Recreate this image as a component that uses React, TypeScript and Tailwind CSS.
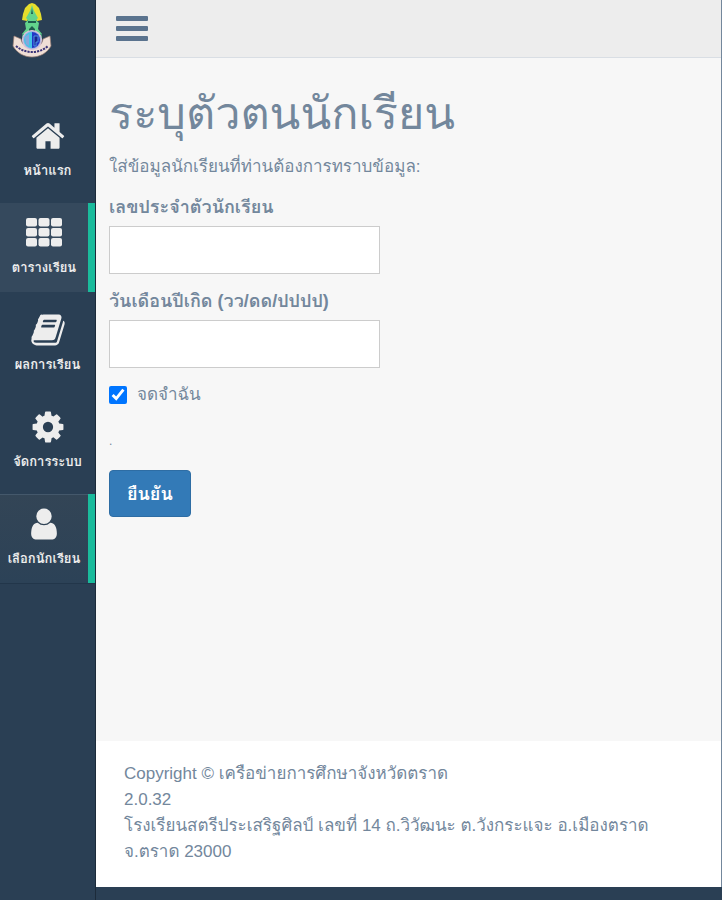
import { useState } from "react";

interface MenuItem {
  label: string;
  icon: "home" | "grid" | "book" | "cog" | "user";
  state?: "current" | "open";
}

const MENU: MenuItem[] = [
  { label: "หน้าแรก", icon: "home" },
  { label: "ตารางเรียน", icon: "grid", state: "current" },
  { label: "ผลการเรียน", icon: "book" },
  { label: "จัดการระบบ", icon: "cog" },
  { label: "เลือกนักเรียน", icon: "user", state: "open" },
];

const ICON_PATHS = {
  home: "M1472 992v480q0 26-19 45t-45 19h-384v-384h-256v384h-384q-26 0-45-19t-19-45v-480q0-1 .5-3t.5-3l575-474 575 474q1 2 1 6zm223-69l-62 74q-8 9-21 11h-3q-13 0-21-7l-692-577-692 577q-12 8-24 7-13-2-21-11l-62-74q-8-10-7-23.5t11-21.5l719-599q32-26 76-26t76 26l244 204v-195q0-14 9-23t23-9h192q14 0 23 9t9 23v408l219 182q10 8 11 21.5t-7 23.5z",
  book: "M1703 478q40 57 18 129l-275 906q-19 64-76.5 107.5t-122.5 43.5h-923q-77 0-148.5-53.5t-99.5-131.5q-24-67-2-127 0-4 3-27t4-37q1-8-3-21.5t-3-19.5q2-11 8-21t16.5-23.5 16.5-23.5q23-38 45-91.5t30-91.5q3-10 .5-30t-.5-28q3-11 17-28t17-23q21-36 42-92t25-90q1-9-2.5-32t.5-28q4-13 22-30.5t22-22.5q19-26 42.5-84.5t27.5-96.5q1-8-3-25.5t-2-26.5q2-8 9-18t18-23 17-21q8-12 16.5-30.5t15-35 16-36 19.5-32 26.5-23.5 36-11.5 47.5 5.5l-1 3q38-9 51-9h761q74 0 114 56t18 130l-274 906q-36 119-71.5 153.5t-128.5 34.5h-869q-27 0-38 15-11 16-1 43 24 70 144 70h923q29 0 56-15.5t35-41.5l300-987q7-22 5-57 38 15 59 43zm-1064 2q-4 13 2 22.5t20 9.5h608q13 0 25.5-9.5t16.5-22.5l21-64q4-13-2-22.5t-20-9.5h-608q-13 0-25.5 9.5t-16.5 22.5zm-83 256q-4 13 2 22.5t20 9.5h608q13 0 25.5-9.5t16.5-22.5l21-64q4-13-2-22.5t-20-9.5h-608q-13 0-25.5 9.5t-16.5 22.5z",
  cog: "M1152 896q0-106-75-181t-181-75-181 75-75 181 75 181 181 75 181-75 75-181zm512-109v222q0 12-8 23t-20 13l-185 28q-19 54-39 91 35 50 107 138 10 12 10 25t-9 23q-27 37-99 108t-94 71q-12 0-26-9l-138-108q-44 23-91 38-16 136-29 186-7 28-36 28h-222q-14 0-24.5-8.5t-11.5-21.5l-28-184q-49-16-90-37l-141 107q-10 9-25 9-14 0-25-11-126-114-165-168-7-10-7-23 0-12 8-23 15-21 51-66.5t54-70.5q-27-50-41-99l-183-27q-13-2-21-12.5t-8-23.5v-222q0-12 8-23t19-13l186-28q14-46 39-92-40-57-107-138-10-12-10-24 0-10 9-23 26-36 98.5-107.5t94.5-71.5q13 0 26 10l138 107q44-23 91-38 16-136 29-186 7-28 36-28h222q14 0 24.5 8.5t11.5 21.5l28 184q49 16 90 37l142-107q9-9 24-9 13 0 25 10 129 119 165 170 7 8 7 22 0 12-8 23-15 21-51 66.5t-54 70.5q26 50 41 98l183 28q13 2 21 12.5t8 23.5z",
  user: "M1536 1399q0 109-62.5 187t-150.5 78h-854q-88 0-150.5-78t-62.5-187q0-85 8.5-160.5t31.5-152 58.5-131 94-89 134.5-34.5q131 128 313 128t313-128q76 0 134.5 34.5t94 89 58.5 131 31.5 152 8.5 160.5zm-256-887q0 159-112.5 271.5t-271.5 112.5-271.5-112.5-112.5-271.5 112.5-271.5 271.5-112.5 271.5 112.5 112.5 271.5z",
};

function MenuIcon({ name }: { name: MenuItem["icon"] }) {
  if (name === "grid") {
    return (
      <svg viewBox="0 0 36 36" className="h-9 w-9 fill-current" aria-hidden="true">
        {[3, 13, 23].map((y) =>
          [0, 12.5, 25].map((x) => (
            <rect key={`${x}-${y}`} x={x} y={y} width="11" height="8.5" rx="2" />
          )),
        )}
      </svg>
    );
  }
  return (
    <svg viewBox="0 0 1792 1792" className="h-9 w-9 fill-current" aria-hidden="true">
      <path d={ICON_PATHS[name]} />
    </svg>
  );
}

function SchoolLogo() {
  return (
    <svg viewBox="0 0 40 56" className="h-14 w-10" role="img" aria-label="ตราโรงเรียน">
      {/* crown */}
      <path d="M17 1l-4 4-2 6-1 6 5 1 5-9 5 9 5-1-1-6-2-6-4-4-3-1z" fill="#e6de2c" />
      <path d="M20 2l2 6 4 7-2 2 3 3-1 6 4 5v5H10v-5l4-5-1-6 3-3-2-2 4-7z" fill="#62d38c" />
      <path d="M20 5l1 6h-2zM16 18h8v2h-8zM17 26l3-3 3 3v3h-6z" fill="#1e5c4c" />
      <path d="M11 31v4M29 31v4" stroke="#2f7f68" strokeWidth="1.5" />
      {/* ribbon */}
      <path
        d="M2 33l7 3c1 6 5 9 11 9s10-3 11-9l7-3 1 10c-4 7-11 11-19 11S5 50 1 43z"
        fill="#f0dfd6"
        stroke="#9a7c72"
        strokeWidth="0.7"
      />
      <path d="M4 43c9 8 23 8 32 0" fill="none" stroke="#3b3478" strokeWidth="2" strokeDasharray="2.2 1" />
      {/* round seal */}
      <circle cx="20" cy="37" r="9.5" fill="#9fb4e4" stroke="#d9c3d8" strokeWidth="1.2" />
      <path d="M20 29a8 8 0 0 0 0 16z" fill="#45c3e6" />
      <path d="M20 29a8 8 0 0 1 0 16z" fill="#2336c4" />
      <path d="M13 34l4-3v12l-3-2z" fill="#87a8dc" />
      <path d="M22 33h4v6h-2v4h-2z" fill="#1a2290" stroke="#59a9ee" strokeWidth="0.8" />
    </svg>
  );
}

function Sidebar() {
  return (
    <aside className="w-24 shrink-0 border-r border-[#1c2b3a]">
      <div className="flex h-[106px] items-start pl-3 pt-[3px]">
        <SchoolLogo />
      </div>
      <nav className="flex flex-col gap-2">
        {MENU.map((item) => (
          <a
            key={item.label}
            href="#"
            className={`flex h-[89px] flex-col items-center whitespace-nowrap pt-3 text-[13px] leading-[26px] font-bold text-[#ededed] ${
              item.state === "current"
                ? "border-r-[7px] border-[#1abb9c] bg-[#35495d]"
                : item.state === "open"
                  ? "border-r-[7px] border-[#1abb9c] bg-linear-to-b from-[#334556] to-[#2c4257] shadow-[0_1px_0_#22364a,inset_0_1px_0_#44586b]"
                  : ""
            }`}
          >
            <MenuIcon name={item.icon} />
            <span className="mt-1">{item.label}</span>
          </a>
        ))}
      </nav>
    </aside>
  );
}

export default function App() {
  const [studentId, setStudentId] = useState("");
  const [birthday, setBirthday] = useState("");
  const [remember, setRemember] = useState(true);

  return (
    <div className="flex min-h-screen bg-[#2a3f54] font-['Liberation_Sans','Loma','Garuda','Waree','Noto_Sans_Thai_Looped','Noto_Sans_Thai',sans-serif] text-[17px] leading-[26px] text-[#73879c]">
      <Sidebar />
      <div className="mb-[13px] flex min-w-0 flex-1 flex-col border-r border-[#73879c] bg-[#f7f7f7]">
        <header className="flex h-[58px] items-center border-b border-[#d9dee4] bg-[#ededed] pl-5">
          <button type="button" aria-label="เมนู" className="flex w-8 flex-col gap-[5px]">
            <span className="h-[5px] rounded-[1px] bg-[#5a738e]" />
            <span className="h-[5px] rounded-[1px] bg-[#5a738e]" />
            <span className="h-[5px] rounded-[1px] bg-[#5a738e]" />
          </button>
        </header>

        <main className="flex-1 px-[13px] pt-[26px]">
          <h1 className="text-[45px] leading-[60px]">ระบุตัวตนนักเรียน</h1>
          <p className="mt-[10px]">ใส่ข้อมูลนักเรียนที่ท่านต้องการทราบข้อมูล:</p>
          <form onSubmit={(e) => e.preventDefault()}>
            <label htmlFor="student-id" className="mt-[14px] block text-lg leading-[26px] font-bold">
              เลขประจำตัวนักเรียน
            </label>
            <input
              id="student-id"
              value={studentId}
              onChange={(e) => setStudentId(e.target.value)}
              className="mt-[6px] block h-12 w-[271px] border border-[#cccccc] bg-white px-4"
            />
            <label htmlFor="birthday" className="mt-[14px] block text-lg leading-[26px] font-bold">
              วันเดือนปีเกิด (วว/ดด/ปปปป)
            </label>
            <input
              id="birthday"
              value={birthday}
              onChange={(e) => setBirthday(e.target.value)}
              className="mt-[6px] block h-12 w-[271px] border border-[#cccccc] bg-white px-4"
            />
            <label className="mt-[14px] flex items-center gap-[10px]">
              <input
                type="checkbox"
                checked={remember}
                onChange={(e) => setRemember(e.target.checked)}
                className="h-[18px] w-[18px] accent-[#0075ff]"
              />
              จดจำฉัน
            </label>
            <p className="mt-5 text-xs leading-[26px]">.</p>
            <button
              type="submit"
              className="mt-4 h-[47px] rounded-sm border border-[#2e6da4] bg-[#337ab7] px-[17px] text-lg leading-[26px] font-bold text-white"
            >
              ยืนยัน
            </button>
          </form>
        </main>

        <footer className="bg-white px-7 pt-5 pb-[22px]">
          <p>Copyright © เครือข่ายการศึกษาจังหวัดตราด</p>
          <p>2.0.32</p>
          <p>
            โรงเรียนสตรีประเสริฐศิลป์ เลขที่ 14 ถ.วิวัฒนะ ต.วังกระแจะ อ.เมืองตราด
            <br />
            จ.ตราด 23000
          </p>
        </footer>
      </div>
    </div>
  );
}
